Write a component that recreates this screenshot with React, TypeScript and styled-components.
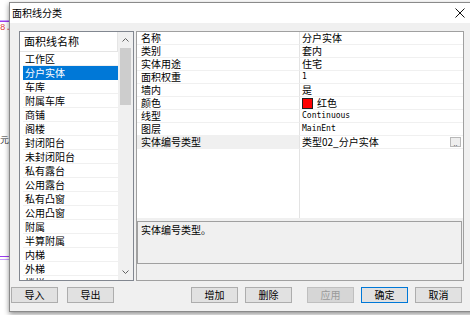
import React from 'react'
import styled, { createGlobalStyle } from 'styled-components'

const GlobalStyle = createGlobalStyle`
  html, body {
    margin: 0;
    padding: 0;
  }
  body {
    width: 470px;
    height: 315px;
    overflow: hidden;
    background: #ffffff;
    font-family: "Noto Sans CJK SC", "Liberation Sans", sans-serif;
    font-size: 10px;
    line-height: 12px;
    color: #000000;
  }
`

// CAD 画布背景
const Canvas = styled.div`
  position: relative;
  width: 470px;
  height: 315px;
  box-sizing: border-box;
  padding: 2px 0 0 9px;
  overflow: hidden;
  background: #ffffff;
`

const CadLine = styled.div<{ $top: number; $color: string }>`
  position: absolute;
  left: 0;
  top: ${({ $top }) => $top}px;
  width: 12px;
  height: 1px;
  background: ${({ $color }) => $color};
`

const CadText = styled.span<{ $top: number; $color: string }>`
  position: absolute;
  left: 0;
  top: ${({ $top }) => $top}px;
  font-family: "Liberation Mono", monospace;
  font-size: 9px;
  line-height: 9px;
  color: ${({ $color }) => $color};
`

// 对话框
const Dialog = styled.div`
  position: relative;
  width: 473px;
  border: 1px solid #8a8a8a;
  background: #f0f0f0;
  box-shadow: 0 2px 5px rgba(0, 0, 0, 0.45);
`

const TitleBar = styled.div`
  display: flex;
  align-items: center;
  justify-content: space-between;
  height: 20px;
  padding-left: 2px;
  background: #ffffff;
  font-size: 10px;
`

const CloseButton = styled.div`
  display: flex;
  align-items: center;
  justify-content: center;
  width: 46px;
  height: 20px;
`

const Body = styled.div`
  display: flex;
  flex-direction: column;
  gap: 6px;
  padding: 8px 0 8px 0;
`

const MainRow = styled.div`
  display: flex;
  gap: 2px;
  height: 250px;
  padding: 0 19px 0 9px;
`

// 左侧列表
const ListBox = styled.div`
  display: flex;
  width: 115px;
  box-sizing: border-box;
  border: 1px solid #828790;
  background: #ffffff;
  overflow: hidden;
`

const ListColumn = styled.div`
  flex: 1;
  display: flex;
  flex-direction: column;
  overflow: hidden;
`

const ListHeader = styled.div`
  height: 20px;
  box-sizing: border-box;
  padding-left: 4px;
  display: flex;
  align-items: center;
  font-size: 11px;
  line-height: 13px;
  border-bottom: 1px solid #e5e5e5;
  border-right: 1px solid #e5e5e5;
  flex-shrink: 0;
`

const ListRows = styled.div`
  padding-left: 3px;
  overflow: hidden;
`

const ListItem = styled.div<{ $selected?: boolean }>`
  height: 14px;
  box-sizing: border-box;
  padding-left: 2px;
  line-height: 13px;
  white-space: nowrap;
  border-bottom: 1px solid ${({ $selected }) => ($selected ? '#0078d7' : '#f0f0f0')};
  background: ${({ $selected }) => ($selected ? '#0078d7' : 'transparent')};
  color: ${({ $selected }) => ($selected ? '#ffffff' : '#000000')};
`

const ScrollBar = styled.div`
  width: 15px;
  display: flex;
  flex-direction: column;
  background: #f0f0f0;
`

const ScrollArrow = styled.div`
  height: 16px;
  display: flex;
  align-items: center;
  justify-content: center;
  flex-shrink: 0;
`

const ScrollTrack = styled.div`
  flex: 1;
  padding: 0 2px;
`

const ScrollThumb = styled.div`
  height: 57px;
  background: #cdcdcd;
`

// 右侧属性面板
const PropertyPanel = styled.div`
  flex: 1;
  display: flex;
  flex-direction: column;
  border: 1px solid #a0a0a0;
  box-sizing: border-box;
`

const PropertyGrid = styled.div`
  height: 186px;
  display: grid;
  grid-template-columns: 163px 1fr;
  grid-template-rows: repeat(9, 13px) 1fr;
  background: #ffffff;
`

const NameCell = styled.div<{ $selected?: boolean }>`
  padding-left: 4px;
  line-height: 12px;
  white-space: nowrap;
  border-right: 1px solid #e3e3e3;
  border-bottom: 1px solid #f0f0f0;
  background: ${({ $selected }) => ($selected ? '#f0f0f0' : '#ffffff')};
`

const ValueCell = styled.div<{ $mono?: boolean }>`
  display: flex;
  align-items: center;
  gap: 4px;
  padding-left: 2px;
  line-height: 12px;
  white-space: nowrap;
  border-bottom: 1px solid #f0f0f0;
  font-family: ${({ $mono }) =>
    $mono ? '"DejaVu Sans Mono", "Liberation Mono", monospace' : '"Noto Sans CJK SC", "Liberation Sans", sans-serif'};
  font-size: ${({ $mono }) => ($mono ? '8px' : '10px')};
`

const FillerCell = styled.div<{ $divider?: boolean }>`
  border-right: ${({ $divider }) => ($divider ? '1px solid #e3e3e3' : 'none')};
`

const Swatch = styled.span<{ $color: string }>`
  width: 9px;
  height: 9px;
  flex-shrink: 0;
  background: ${({ $color }) => $color};
  border: 1px solid #202020;
`

const BrowseButton = styled.span`
  margin-left: auto;
  margin-right: 2px;
  width: 11px;
  height: 10px;
  flex-shrink: 0;
  box-sizing: border-box;
  border: 1px solid #b8b8b8;
  background: #eeeeee;
  font-size: 7px;
  line-height: 10px;
  text-align: center;
  color: #555;
`

const DescriptionBox = styled.div`
  height: 43px;
  margin: 3px 1px 0 0;
  box-sizing: border-box;
  border: 1px solid #a0a0a0;
  background: #f0f0f0;
  padding: 2px 0 0 3px;
`

const StatusBar = styled.div`
  height: 14px;
  margin-top: 1px;
  background: #f0f0f0;
`

// 底部按钮
const ButtonRow = styled.div`
  display: flex;
  align-items: center;
  padding: 0 21px 0 1px;
`

const ButtonGroup = styled.div`
  display: flex;
  gap: 7px;
`

const Spacer = styled.div`
  flex: 1;
`

const DialogButton = styled.button<{ $variant?: 'default' | 'disabled'; $extra?: number }>`
  width: 47px;
  height: 16px;
  padding: 0;
  margin-left: ${({ $extra }) => $extra ?? 0}px;
  box-sizing: border-box;
  font-family: "Noto Sans CJK SC", "Liberation Sans", sans-serif;
  font-size: 10px;
  line-height: 12px;
  border: 1px solid
    ${({ $variant }) =>
      $variant === 'default' ? '#0078d7' : $variant === 'disabled' ? '#bfbfbf' : '#adadad'};
  background: ${({ $variant }) => ($variant === 'disabled' ? '#d6d6d6' : '#e1e1e1')};
  color: ${({ $variant }) => ($variant === 'disabled' ? '#9a9a9a' : '#000000')};
`

const categories = [
  '工作区', '分户实体', '车库', '附属车库', '商铺', '阁楼', '封闭阳台', '未封闭阳台',
  '私有露台', '公用露台', '私有凸窗', '公用凸窗', '附属', '半算附属', '内梯', '外梯', '楼梯',
]

interface PropertyRow {
  name: string
  value: string
  mono?: boolean
  swatch?: string
  selected?: boolean
  browse?: boolean
}

const properties: PropertyRow[] = [
  { name: '名称', value: '分户实体' },
  { name: '类别', value: '套内' },
  { name: '实体用途', value: '住宅' },
  { name: '面积权重', value: '1', mono: true },
  { name: '墙内', value: '是' },
  { name: '颜色', value: '红色', swatch: '#ff0000' },
  { name: '线型', value: 'Continuous', mono: true },
  { name: '图层', value: 'MainEnt', mono: true },
  { name: '实体编号类型', value: '类型02_分户实体', selected: true, browse: true },
]

const Chevron = ({ up }: { up?: boolean }) => (
  <svg width="7" height="4" viewBox="0 0 7 4">
    <polyline
      points={up ? '0.5,3.5 3.5,0.5 6.5,3.5' : '0.5,0.5 3.5,3.5 6.5,0.5'}
      fill="none"
      stroke="#606060"
      strokeWidth="1"
    />
  </svg>
)

export default function App() {
  return (
    <>
      <GlobalStyle />
      <Canvas>
        <CadLine $top={20} $color="#c8a0ff" />
        <CadLine $top={21} $color="#9b3cf0" />
        <CadText $top={24} $color="#e03c3c">8.3</CadText>
        <CadText $top={137} $color="#303030">元-</CadText>
        <CadLine $top={256} $color="#9b3cf0" />
        <CadLine $top={259} $color="#c8a0ff" />

        <Dialog>
          <TitleBar>
            <span>面积线分类</span>
            <CloseButton>
              <svg width="10" height="10" viewBox="0 0 10 10">
                <path d="M0.5 0.5 L9.5 9.5 M9.5 0.5 L0.5 9.5" stroke="#111" strokeWidth="1" />
              </svg>
            </CloseButton>
          </TitleBar>

          <Body>
            <MainRow>
              <ListBox>
                <ListColumn>
                  <ListHeader>面积线名称</ListHeader>
                  <ListRows>
                    {categories.map((c) => (
                      <ListItem key={c} $selected={c === '分户实体'}>
                        {c}
                      </ListItem>
                    ))}
                  </ListRows>
                </ListColumn>
                <ScrollBar>
                  <ScrollArrow>
                    <Chevron up />
                  </ScrollArrow>
                  <ScrollTrack>
                    <ScrollThumb />
                  </ScrollTrack>
                  <ScrollArrow>
                    <Chevron />
                  </ScrollArrow>
                </ScrollBar>
              </ListBox>

              <PropertyPanel>
                <PropertyGrid>
                  {properties.map((p) => (
                    <React.Fragment key={p.name}>
                      <NameCell $selected={p.selected}>{p.name}</NameCell>
                      <ValueCell $mono={p.mono}>
                        {p.swatch && <Swatch $color={p.swatch} />}
                        <span>{p.value}</span>
                        {p.browse && <BrowseButton>..</BrowseButton>}
                      </ValueCell>
                    </React.Fragment>
                  ))}
                  <FillerCell $divider />
                  <FillerCell />
                </PropertyGrid>
                <DescriptionBox>实体编号类型。</DescriptionBox>
                <StatusBar />
              </PropertyPanel>
            </MainRow>

            <ButtonRow>
              <ButtonGroup>
                <DialogButton>导入</DialogButton>
                <DialogButton $extra={2}>导出</DialogButton>
              </ButtonGroup>
              <Spacer />
              <ButtonGroup>
                <DialogButton>增加</DialogButton>
                <DialogButton>删除</DialogButton>
                <DialogButton $variant="disabled" $extra={8}>应用</DialogButton>
                <DialogButton $variant="default">确定</DialogButton>
                <DialogButton>取消</DialogButton>
              </ButtonGroup>
            </ButtonRow>
          </Body>
        </Dialog>
      </Canvas>
    </>
  )
}
